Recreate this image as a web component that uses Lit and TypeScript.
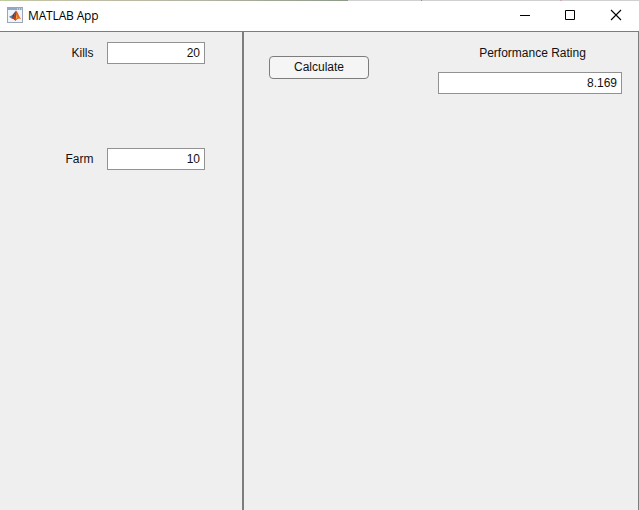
import { LitElement, html, css } from "lit";
import { customElement, property } from "lit/decorators.js";

@customElement("number-field")
class NumberField extends LitElement {
  @property() label = "";
  @property() value = "";

  static styles = css`
    :host { display: flex; align-items: center; height: 22px; }
    .label { width: 93.5px; text-align: right; margin-right: 13.5px; white-space: nowrap; }
    .box {
      box-sizing: border-box; width: 98px; height: 22px; line-height: 20px;
      border: 1px solid #929292; background: #fff; padding-right: 4px; text-align: right;
    }
    :host([stacked]) { flex-direction: column; align-items: stretch; height: auto; }
    :host([stacked]) .label {
      width: auto; margin: 0 0 8px 5px; height: 22px; line-height: 22px; text-align: center;
    }
    :host([stacked]) .box { width: 184px; }
  `;

  render() {
    return html`<span class="label">${this.label}</span><div class="box">${this.value}</div>`;
  }
}

@customElement("app-root")
class AppRoot extends LitElement {
  static styles = css`
    :host {
      display: flex; flex-direction: column; box-sizing: border-box;
      width: 639px; height: 510px; overflow: hidden; background: #efefef;
      font: 12px "Liberation Sans", Arial, sans-serif; color: #111;
    }
    .edge {
      height: 1px; flex: none;
      background: linear-gradient(to right, #bfcb9d, #c3bfa8 60px, #b3b5a2 200px, #8c9b88 348px, #d0d0d0 348px 421px, #aa7d83 421px 422px, #d0d0d0 422px 560px, #d9a5b0 560px 562px, #d0d0d0 562px);
    }
    .title {
      height: 30px; flex: none; display: flex; align-items: center; background: #fff;
      border-bottom: 1px solid #7d7d7d;
    }
    .logo { width: 16px; height: 16px; margin: -2px 0 0 7px; display: block; }
    .name {
      flex: 1; margin-left: 5px; font: 12px/16px "Open Sans", "Noto Sans", sans-serif;
      letter-spacing: -0.15px; color: #000; white-space: nowrap;
    }
    .controls { display: flex; }
    .controls svg { display: block; width: 46px; height: 30px; }
    .body { flex: 1; display: flex; }
    .left {
      box-sizing: border-box; width: 244px; border-right: 2px solid #7d7d7d;
      padding-top: 10px; display: flex; flex-direction: column; gap: 84px;
    }
    .right {
      flex: 1; display: flex; align-items: flex-start; justify-content: space-between;
      padding: 10px 16px 0 25px; border-right: 1px solid #7d7d7d;
    }
    .calc {
      box-sizing: border-box; width: 100px; height: 23px; margin: 14px 0 0; padding: 0 0 1px;
      border: 1px solid #7d7d7d; border-radius: 4px; background: #f5f5f5;
      font: inherit; color: #111; text-align: center;
    }
  `;

  render() {
    return html`
      <div class="edge"></div>
      <header class="title">
        <svg class="logo" viewBox="0 0 16 16">
          <rect x=".5" y=".5" width="15" height="15" fill="#f1f4f8" stroke="#98a6b8" />
          <path d="M1 1h14v2H1z" fill="#91a9c7" />
          <path d="M10 2h1M12 2h1M14 2h1" stroke="#e8eef6" />
          <path d="M2 9.8 5.5 8 7 9.3 5 11.8z" fill="#4d83a8" />
          <path d="M5.5 8 9 3.6 7.3 9.4 5 11.8z" fill="#294b68" />
          <path d="M9 3.6C10.7 4.7 11.7 9 14.4 12.4 12.3 10.8 10.5 11.6 8.3 14 7.5 12.4 6.6 11.4 5 11.8 7.3 10 8 6 9 3.6z" fill="#e0682e" />
          <path d="M9 3.6C9.6 6 9.3 9.5 8.3 14 7.5 12.4 6.6 11.4 5 11.8 7.3 10 8 6 9 3.6z" fill="#b33a22" />
          <path d="M9.4 7 10.4 10.5 8.8 12.6z" fill="#f3a43c" />
        </svg>
        <span class="name">MATLAB App</span>
        <div class="controls">
          <svg viewBox="0 0 46 30"><path d="M19 14.5h10" stroke="#000" /></svg>
          <svg viewBox="0 0 46 30"><path d="M18.5 9.5h9v9h-9z" fill="none" stroke="#000" /></svg>
          <svg viewBox="0 0 46 30"><path d="M18 9l10 10M28 9 18 19" stroke="#000" stroke-width="1.1" /></svg>
        </div>
      </header>
      <main class="body">
        <section class="left">
          <number-field label="Kills" value="20"></number-field>
          <number-field label="Farm" value="10"></number-field>
        </section>
        <section class="right">
          <button class="calc">Calculate</button>
          <number-field stacked label="Performance Rating" value="8.169"></number-field>
        </section>
      </main>
    `;
  }
}
